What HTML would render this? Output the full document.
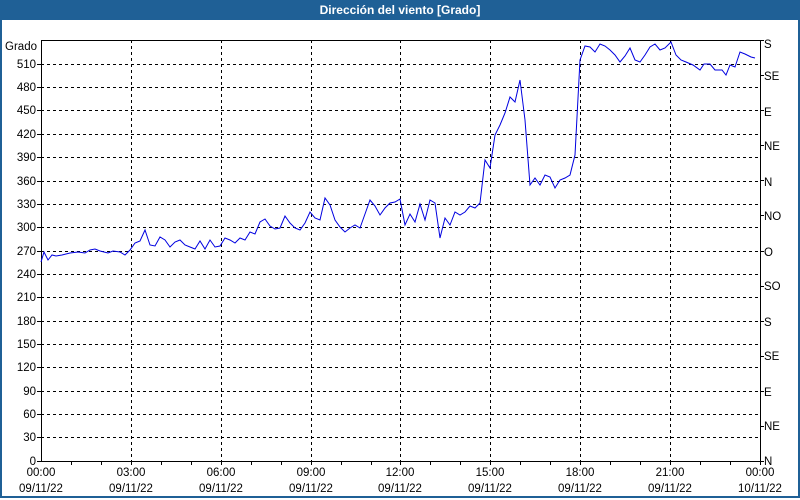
<!DOCTYPE html>
<html><head><meta charset="utf-8"><style>
body{margin:0;width:800px;height:500px;overflow:hidden;background:#fff;font-family:"Liberation Sans",sans-serif}
.win{position:absolute;left:0;top:0;width:796px;height:496px;border:2px solid #1f6096;border-top:0;}
.title{position:absolute;left:0;top:0;width:800px;height:20px;background:#1f6096;color:#fff;font-weight:bold;font-size:12px;text-align:center;line-height:20px}
svg{position:absolute;left:0;top:0}
</style></head><body>
<div class="win"></div>
<div class="title">Dirección del viento [Grado]</div>
<svg width="800" height="500" font-family="Liberation Sans, sans-serif" font-size="11.5">
<g stroke="#000" stroke-dasharray="3,3" stroke-width="1">
<path d="M41 64.5H760M41 87.5H760M41 110.5H760M41 134.5H760M41 157.5H760M41 181.5H760M41 204.5H760M41 227.5H760M41 251.5H760M41 274.5H760M41 297.5H760M41 321.5H760M41 344.5H760M41 367.5H760M41 391.5H760M41 414.5H760M41 437.5H760"/>
<path d="M131.5 40V461M221.5 40V461M311.5 40V461M400.5 40V461M490.5 40V461M580.5 40V461M670.5 40V461"/>
</g>
<rect x="41.5" y="40.5" width="719" height="421" fill="none" stroke="#000"/>
<g stroke="#000"><path d="M71.5 461v4M101.5 461v4M131.5 461v4M161.5 461v4M191.5 461v4M221.5 461v4M251.5 461v4M281.5 461v4M311.5 461v4M341.5 461v4M371.5 461v4M400.5 461v4M430.5 461v4M460.5 461v4M490.5 461v4M520.5 461v4M550.5 461v4M580.5 461v4M610.5 461v4M640.5 461v4M670.5 461v4M700.5 461v4M730.5 461v4M760.5 461v4"/>
<path d="M37 64.5h4M37 87.5h4M37 110.5h4M37 134.5h4M37 157.5h4M37 181.5h4M37 204.5h4M37 227.5h4M37 251.5h4M37 274.5h4M37 297.5h4M37 321.5h4M37 344.5h4M37 367.5h4M37 391.5h4M37 414.5h4M37 437.5h4M37 461.5h4"/>
<path d="M760 40.5h4M760 75.5h4M760 110.5h4M760 145.5h4M760 180.5h4M760 215.5h4M760 251.5h4M760 286.5h4M760 321.5h4M760 356.5h4M760 391.5h4M760 426.5h4M760 461.5h4"/></g>
<g text-anchor="end">
<text x="37" y="50">Grado</text>
<text x="36" y="68">510</text><text x="36" y="91">480</text><text x="36" y="114">450</text><text x="36" y="138">420</text><text x="36" y="161">390</text><text x="36" y="185">360</text><text x="36" y="208">330</text><text x="36" y="231">300</text><text x="36" y="255">270</text><text x="36" y="278">240</text><text x="36" y="301">210</text><text x="36" y="325">180</text><text x="36" y="348">150</text><text x="36" y="371">120</text><text x="36" y="395">90</text><text x="36" y="418">60</text><text x="36" y="441">30</text><text x="36" y="465">0</text>
</g>
<g>
<text x="764" y="48">S</text><text x="764" y="80">SE</text><text x="764" y="116">E</text><text x="764" y="150">NE</text><text x="764" y="186">N</text><text x="764" y="220">NO</text><text x="764" y="256">O</text><text x="764" y="290">SO</text><text x="764" y="326">S</text><text x="764" y="360">SE</text><text x="764" y="396">E</text><text x="764" y="430">NE</text><text x="764" y="465">N</text>
</g>
<g text-anchor="middle">
<text x="41" y="476">00:00</text><text x="41" y="492">09/11/22</text>
<text x="131" y="476">03:00</text><text x="131" y="492">09/11/22</text>
<text x="221" y="476">06:00</text><text x="221" y="492">09/11/22</text>
<text x="311" y="476">09:00</text><text x="311" y="492">09/11/22</text>
<text x="400" y="476">12:00</text><text x="400" y="492">09/11/22</text>
<text x="490" y="476">15:00</text><text x="490" y="492">09/11/22</text>
<text x="580" y="476">18:00</text><text x="580" y="492">09/11/22</text>
<text x="670" y="476">21:00</text><text x="670" y="492">09/11/22</text>
<text x="760" y="476">00:00</text><text x="760" y="492">10/11/22</text>
</g>
<polyline fill="none" stroke="#0000e0" stroke-width="1" points="41,262 44,252 48,260 52,255 56,256 62,255 70,253 78,252 85,253 90,250 95,249 100,251 108,253 113,251 120,252 125,255 130,250 135,243 140,241 145,230 150,245 155,246 160,237 165,240 170,247 175,242 180,240 185,245 190,247 195,249 200,241 205,249 210,240 215,247 220,246 225,238 230,240 235,243 240,238 245,240 250,232 255,234 260,222 265,219 270,226 275,229 280,228 285,216 290,223 295,228 300,230 305,223 310,212 315,218 320,220 325,198 330,205 335,220 340,227 345,232 350,228 355,225 360,228 365,214 370,200 375,206 380,215 385,208 390,203 395,202 400,199 405,225 410,214 415,222 420,204 425,220 430,200 435,203 440,238 445,218 450,225 455,212 460,215 465,212 470,206 475,208 480,203 485,160 490,168 495,135 500,125 505,113 510,97 515,102 520,80 525,120 530,185 535,178 540,185 545,175 550,177 555,188 560,180 565,178 570,175 575,155 580,60 585,46 590,47 595,52 600,44 605,46 610,50 615,55 620,62 625,56 630,48 635,60 640,62 645,55 650,47 655,44 660,50 665,48 671,42 676,55 681,60 686,62 693,65 700,70 704,64 710,64 715,70 722,70 726,75 730,65 735,67 740,52 745,54 751,57 755,58"/>
</svg>
</body></html>
